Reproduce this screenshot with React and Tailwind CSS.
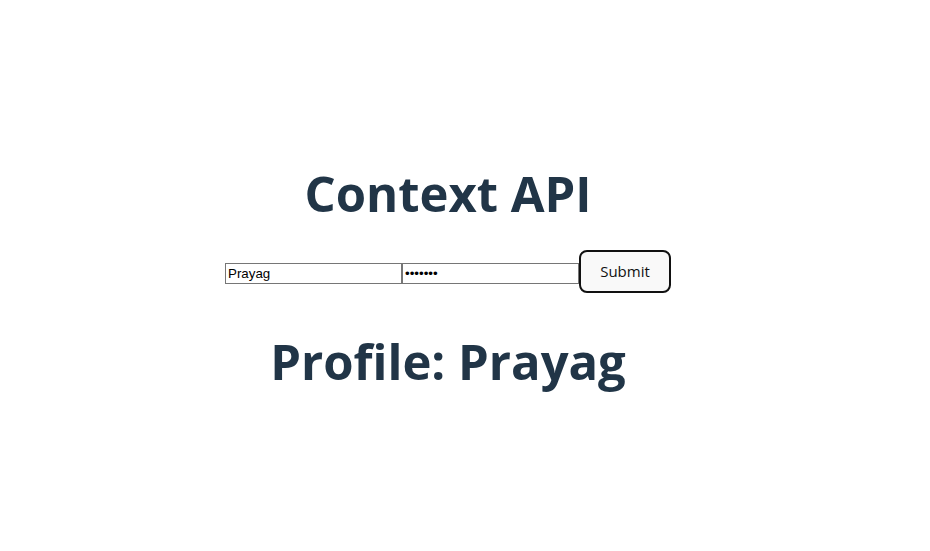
import React from "react";

export default function App() {
  return (
    <div className="w-full h-[551px] bg-white flex flex-col items-center justify-center pr-[34px] pt-[4px]" style={{ fontFamily: '"Open Sans", "Noto Sans", sans-serif' }}>
      <h1 className="text-[49px] leading-[1.1] font-bold text-[#213547] m-0">Context API</h1>
      <div className="flex items-center mt-[29px]">
        <input
          type="text"
          defaultValue="Prayag"
          className="w-[177px] h-[21px] mt-[4px] border border-[#767676] px-[2px] text-[13.33px] text-black bg-white outline-none"
          style={{ fontFamily: '"Liberation Sans", Arial, sans-serif' }}
        />
        <input
          type="password"
          defaultValue="1234567"
          className="w-[177px] h-[21px] mt-[4px] border border-[#767676] px-[2px] text-[13.33px] text-black bg-white outline-none"
          style={{ fontFamily: '"Liberation Sans", Arial, sans-serif' }}
        />
        <button className="w-[92px] h-[43px] border-2 border-[#111] rounded-[8px] bg-[#f9f9f9] text-[15px] font-medium text-[#111]">
          Submit
        </button>
      </div>
      <h2 className="text-[49px] leading-[1.1] font-bold text-[#213547] mt-[42px]">Profile: Prayag</h2>
    </div>
  );
}
